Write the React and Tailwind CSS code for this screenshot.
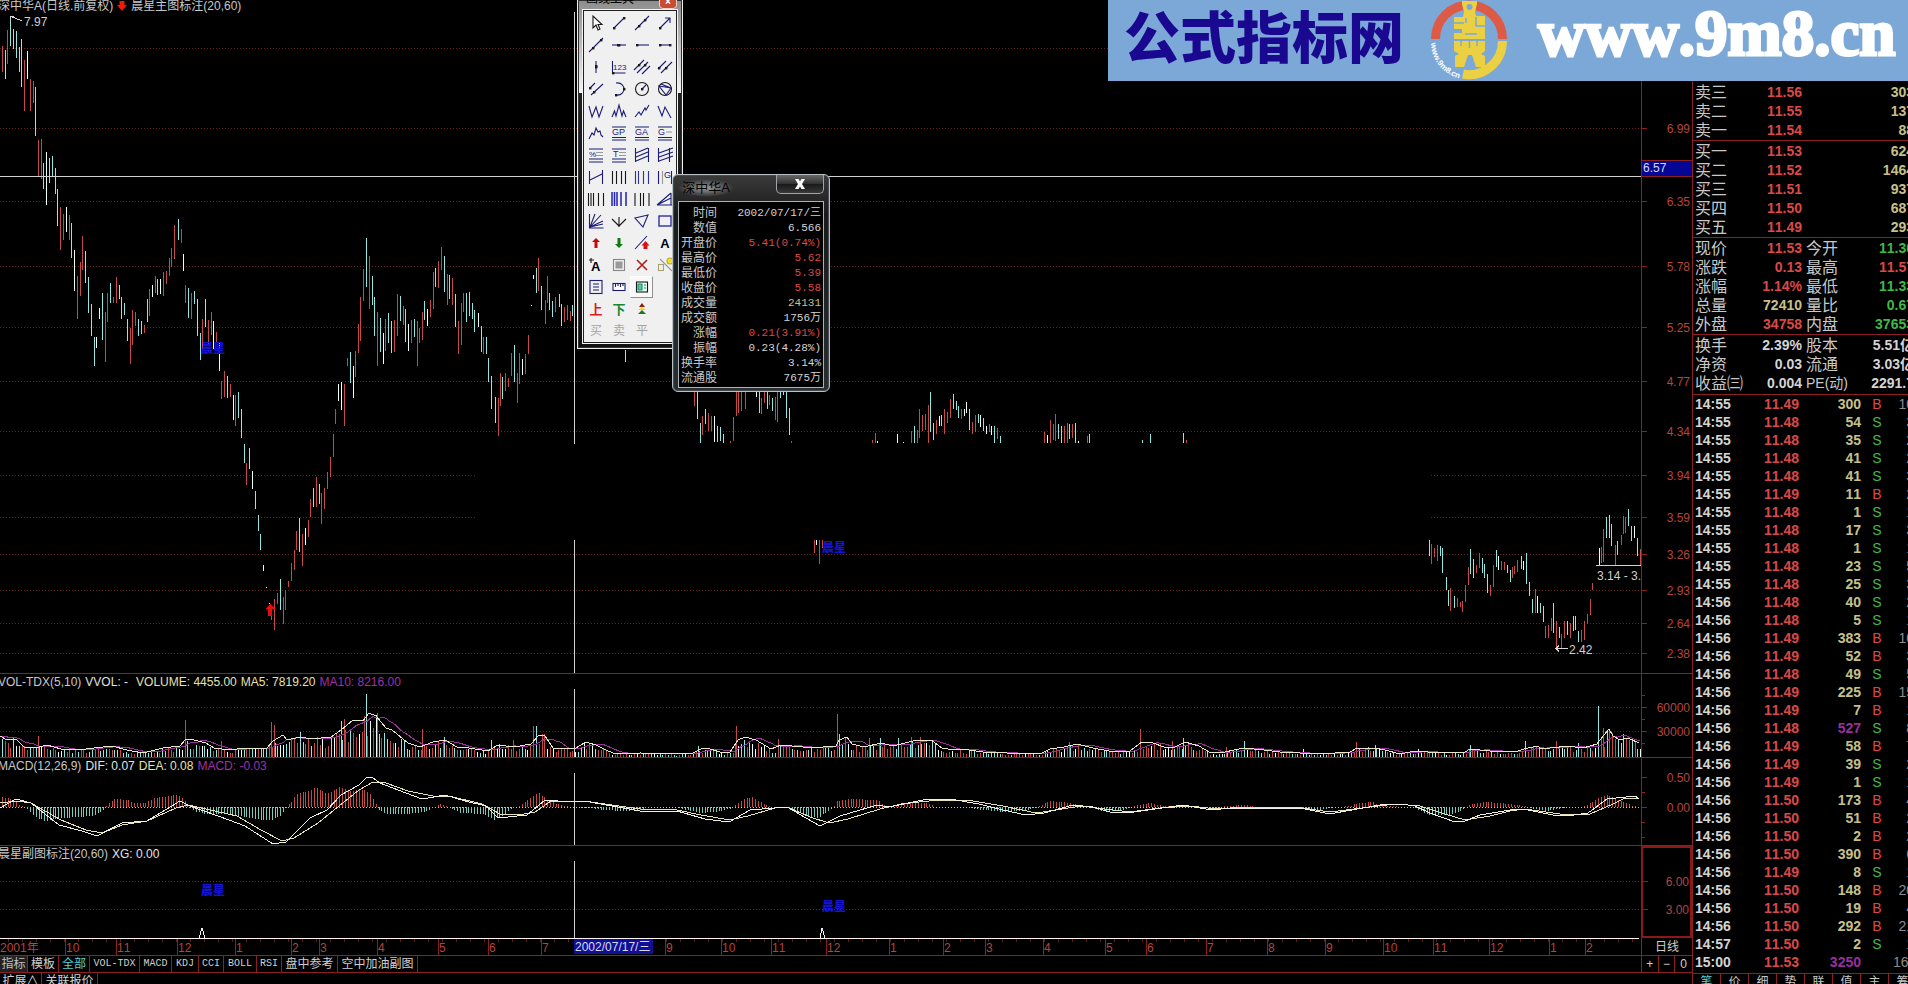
import React from "react";

const RED = "#c44a45";
const CYAN = "#90e6e2";
const WHITE = "#ecfffa";
const TONES = { r: RED, c: CYAN, w: WHITE };

/* Daily ranges: tone + x, top, bottom */
const CANDLES =
  "r2,46,72 c5,50,79 r7,30,64 c10,16,46 c13,29,49 c16,31,58 c19,47,72 c21,39,87 r24,60,111 w27,51,79 r30,79,111 r33,81,103 c35,87,136 r38,140,176 r41,139,179 c43,163,189 w46,152,205 c49,158,183 c52,156,177 c55,168,194 c57,189,226 r60,207,250 r63,214,240 w66,207,232 r69,215,240 c71,223,258 w74,250,291 r77,276,319 r80,262,296 r82,236,270 c85,251,283 c88,277,313 c91,304,336 c94,337,366 w96,337,348 w99,308,319 c102,293,340 r105,312,362 r107,293,322 c110,283,303 r113,297,303 r116,277,303 c119,285,299 c121,297,319 c124,303,315 c127,319,341 r130,328,364 r132,310,345 r135,312,326 c138,319,336 c141,321,334 r144,325,333 c147,299,322 r149,289,316 w152,285,297 r155,276,293 c157,279,295 w160,279,294 r163,272,296 r166,271,284 r169,258,276 r171,248,267 r174,225,259 c178,219,240 r181,229,243 w183,254,271 r185,285,303 c188,288,318 r191,293,319 c194,291,304 c197,299,336 c200,333,360 r202,319,349 c205,299,327 r208,320,345 r211,312,335 w213,321,349 r216,332,343 w219,343,371 r221,381,399 r224,371,397 c227,376,398 r230,384,397 w233,395,420 r235,395,426 c238,392,418 c241,409,438 c244,444,463 r246,463,485 c249,448,469 w252,471,489 c255,491,509 c258,515,531 c260,534,550 w263,565,571 w266,587,588 w269,603,604 r271,608,620 r274,599,630 r277,593,604 c280,579,610 r283,597,624 r285,590,610 r288,581,587 r291,563,581 r294,550,570 r296,531,550 c299,518,552 r302,534,566 w305,528,545 r308,520,537 r310,499,517 c313,488,507 r316,477,507 c319,484,504 r321,493,524 r324,488,509 r327,472,489 r330,457,477 r333,434,457 r335,409,424 w338,384,401 w341,382,410 r344,384,426 r347,358,366 c350,352,383 w353,366,398 r355,351,377 r358,324,353 r360,297,341 r363,269,301 c366,238,287 r369,256,309 c372,276,305 c374,297,336 r377,312,366 c380,318,352 w383,333,364 r385,319,351 c388,313,343 c391,321,353 r394,320,352 r397,294,336 c400,296,321 r403,306,325 c405,309,342 w408,324,351 r411,320,343 c414,319,337 r417,321,366 r419,328,343 r422,312,340 c424,301,320 w427,309,326 r430,300,317 r433,272,309 c435,268,287 r438,261,288 r441,247,270 c444,256,292 r447,274,305 c449,275,299 r452,278,305 c455,294,327 r458,321,354 r461,303,345 r463,293,312 c466,293,322 c469,292,316 c472,303,319 c474,310,332 w478,313,327 c481,326,352 r483,337,354 c486,337,354 c488,358,382 c491,376,409 c495,397,423 r498,398,436 r500,373,406 c502,377,399 r505,373,391 r508,378,387 r511,353,376 c514,345,382 r517,373,403 r519,353,384 w522,359,375 r525,354,374 r528,335,354 w531,305,306 w533,275,279 c536,268,293 r538,258,291 c541,286,310 r545,300,324 r547,276,303 c549,293,310 c552,301,317 r555,297,312 c559,294,307 c561,304,326 r564,307,322 r567,305,320 r570,311,321 c572,305,316 c625,350,362 r694,392,406 c697,392,419 c700,423,443 r702,416,435 c705,409,424 r708,413,431 r711,416,431 w714,416,442 c717,426,442 c720,427,441 c723,434,443 r730,441,443 r733,417,441 r736,392,416 r738,392,413 r741,392,411 r745,392,409 w756,390,397 c759,392,413 r761,398,414 r764,392,403 c767,392,409 r769,395,405 c772,398,411 r775,397,420 r777,392,422 c780,392,398 c783,390,395 c786,392,418 c789,408,435 r791,441,443 r872,440,443 r875,433,443 w877,441,443 w897,434,443 w903,442,443 r911,431,443 c914,426,443 r917,430,443 r919,409,438 r922,415,431 r925,414,430 r928,405,443 c930,392,432 c933,423,440 r936,420,434 w939,416,426 c941,415,426 r944,409,434 r947,412,423 r950,399,418 c953,394,409 c956,401,410 c958,406,418 r961,409,419 w964,409,416 w966,402,413 c969,409,430 r972,422,434 r975,415,432 c978,414,423 w980,415,427 c983,418,431 w986,426,434 r989,424,432 w991,426,435 c994,426,443 r997,428,439 c1000,436,443 r1044,432,443 w1047,435,443 r1050,420,443 r1053,424,440 r1055,414,441 c1058,424,439 c1061,426,443 r1064,426,443 r1067,423,443 c1069,424,439 r1072,424,438 c1075,423,443 w1078,441,443 r1087,436,443 c1089,434,443 c1142,440,443 c1150,434,443 c1183,433,443 r1186,440,443 r814,540,553 w816,540,545 r819,540,564 r822,540,548 c1429,540,556 r1431,544,564 r1434,548,557 r1437,545,561 c1440,546,556 c1442,548,573 c1446,577,590 c1448,590,606 r1450,588,611 c1454,596,608 r1457,598,607 r1460,602,607 r1462,601,612 r1465,585,602 r1468,567,585 c1470,549,574 c1473,559,578 r1476,565,573 r1479,553,568 c1482,558,573 c1484,564,578 c1487,574,593 r1490,585,596 r1493,565,587 c1496,550,567 w1498,556,570 r1501,561,570 r1504,562,570 c1507,565,573 c1510,570,582 r1512,567,578 r1514,566,574 r1517,560,572 c1521,556,569 w1523,561,570 c1526,553,584 c1529,582,596 c1532,599,613 r1535,589,613 w1537,596,613 c1540,603,613 c1543,606,622 r1545,626,638 r1548,625,638 r1551,618,631 c1553,603,633 r1556,621,648 c1559,627,638 r1561,634,648 r1564,621,638 c1567,621,635 r1570,623,638 c1573,616,631 c1575,616,630 c1578,631,642 r1581,630,642 r1584,621,640 r1587,614,624 r1590,599,615 r1592,583,590 w1599,548,565 r1601,547,563 r1603,529,562 c1606,517,538 c1609,515,538 c1611,524,546 r1615,545,565 c1617,541,555 r1621,535,545 r1623,516,534 r1625,517,533 c1628,509,526 c1631,526,541 w1634,526,538 c1637,538,556 r1640,549,565";

const VOLUME_ENVELOPE = [
  [0,21],[7,17],[16,18],[24,10],[39,10],[47,12],[61,8],[78,7],[94,9],[112,11],[127,7],[143,4],[163,9],[180,11],[186,18],[194,17],[206,14],[214,9],[229,7],[245,9],[267,9],[273,16],[283,22],[287,17],[300,20],[312,18],[331,20],[341,27],[353,37],[363,36],[369,44],[376,41],[386,29],[392,27],[408,14],[420,10],[433,15],[445,17],[457,10],[469,9],[488,6],[498,12],[514,10],[531,13],[539,22],[545,21],[553,9],[563,8],[576,9],[586,15],[596,12],[608,6],[616,3],[640,4],[679,3],[693,4],[701,8],[707,9],[720,5],[730,5],[738,17],[745,20],[756,17],[771,8],[781,12],[803,10],[811,9],[836,11],[839,17],[847,20],[852,13],[864,10],[881,14],[893,11],[913,16],[931,17],[942,9],[954,7],[962,8],[983,5],[1007,4],[1040,3],[1050,8],[1064,10],[1077,13],[1093,9],[1109,6],[1130,6],[1142,15],[1150,15],[1167,9],[1175,10],[1185,15],[1199,11],[1209,5],[1220,4],[1244,9],[1264,7],[1280,5],[1320,3],[1350,5],[1357,9],[1375,9],[1385,7],[1400,3],[1415,6],[1440,4],[1465,5],[1470,8],[1490,6],[1515,5],[1524,8],[1537,11],[1542,8],[1567,11],[1583,9],[1597,13],[1600,17],[1609,28],[1613,21],[1620,17],[1628,19],[1639,14],
];

const VOLUME_SPIKES = [
  [38,21,"r"],[185,37,"r"],[221,16,"r"],[271,35,"r"],[274,32,"r"],[300,25,"c"],[341,36,"c"],[344,38,"r"],[366,63,"c"],[377,44,"r"],[422,28,"r"],[444,20,"c"],[491,17,"c"],[513,17,"r"],[533,31,"r"],[536,31,"c"],[698,11,"c"],[736,31,"r"],[778,18,"r"],[837,43,"r"],[839,23,"c"],[869,19,"r"],[880,19,"c"],[898,19,"c"],[911,20,"r"],[920,20,"r"],[1069,15,"r"],[1140,28,"r"],[1172,16,"r"],[1183,19,"c"],[1226,10,"r"],[1244,16,"c"],[1303,8,"w"],[1356,15,"r"],[1375,12,"c"],[1418,8,"w"],[1470,12,"c"],[1525,16,"c"],[1556,16,"r"],[1578,14,"c"],[1598,51,"c"],[1603,29,"r"],[1623,23,"c"],
];

const MACD_BARS = [
  [0,10],[12,8],[18,3],[27,-2],[35,-10],[45,-14],[61,-11],[78,-10],[94,-9],[104,-2],[107,2],[114,8],[127,7],[133,4],[145,4],[155,9],[176,12],[184,8],[188,1],[194,-4],[204,-7],[224,-7],[245,-10],[261,-13],[271,-13],[280,-9],[286,-1],[291,5],[296,13],[310,16],[316,20],[327,13],[339,20],[349,16],[363,17],[369,14],[375,5],[378,-2],[386,-7],[408,-7],[424,-5],[433,-1],[441,3],[447,1],[451,-2],[461,-6],[482,-7],[494,-13],[504,-8],[510,-2],[520,1],[531,10],[539,14],[547,7],[557,3],[565,1],[571,0],[588,-1],[604,-3],[620,-4],[640,-3],[650,0],[677,0],[681,-2],[701,-6],[722,-4],[732,-1],[736,3],[742,7],[752,10],[762,4],[771,0],[787,0],[795,-4],[803,-8],[818,-11],[828,-4],[833,-1],[836,6],[852,8],[877,7],[885,1],[891,0],[905,4],[926,4],[936,0],[964,0],[975,-2],[1003,-5],[1024,-4],[1038,0],[1042,2],[1050,6],[1069,4],[1081,1],[1089,0],[1101,-4],[1118,-4],[1130,-1],[1138,2],[1150,4],[1162,1],[1191,1],[1199,0],[1216,-3],[1224,1],[1244,2],[1256,0],[1290,0],[1300,-1],[1320,-3],[1335,0],[1350,1],[1358,4],[1373,5],[1380,1],[1412,0],[1420,-4],[1430,-8],[1450,-8],[1462,-3],[1466,0],[1472,3],[1483,5],[1500,4],[1517,2],[1528,0],[1533,-2],[1547,-4],[1562,-1],[1567,0],[1583,0],[1588,3],[1598,9],[1607,12],[1615,8],[1625,4],[1633,1],[1639,0],
];

const DIF = [
  [0,-1],[16,8],[31,4],[59,-18],[82,-24],[97,-29],[122,-16],[147,-14],[180,6],[190,1],[229,-13],[245,-19],[273,-37],[286,-35],[310,-11],[327,-3],[341,12],[359,22],[367,30],[372,30],[380,24],[398,17],[422,8],[445,12],[465,6],[486,1],[498,-11],[527,-8],[545,7],[571,5],[584,6],[612,1],[640,-4],[677,-4],[705,-12],[729,-15],[750,-3],[787,0],[820,-19],[840,-9],[877,2],[889,0],[928,8],[950,8],[979,3],[1003,-3],[1026,-8],[1044,-6],[1073,2],[1093,0],[1113,-6],[1134,-5],[1183,2],[1195,0],[1211,-3],[1232,-1],[1300,-1],[1325,-6],[1335,-6],[1363,-1],[1380,2],[1400,3],[1415,1],[1430,-6],[1455,-15],[1465,-14],[1480,-8],[1510,-3],[1523,-2],[1553,-8],[1567,-9],[1588,-6],[1607,8],[1635,11],[1639,8],
];

const DEA = [
  [0,4],[16,6],[31,4],[61,-13],[86,-23],[102,-26],[122,-18],[147,-14],[176,-1],[188,2],[237,-9],[261,-23],[282,-34],[294,-31],[318,-16],[339,1],[359,17],[373,25],[386,24],[408,16],[433,11],[449,11],[482,3],[500,-7],[518,-8],[535,-5],[551,6],[584,6],[640,-2],[677,-3],[701,-8],[730,-13],[748,-9],[775,-1],[787,0],[810,-10],[829,-16],[848,-12],[880,-2],[901,3],[938,7],[967,7],[1003,1],[1036,-6],[1056,-3],[1081,1],[1105,-2],[1130,-5],[1160,-1],[1191,1],[1216,-2],[1244,0],[1295,0],[1330,-5],[1370,0],[1395,3],[1420,1],[1445,-7],[1465,-13],[1490,-9],[1510,-4],[1525,-2],[1560,-7],[1590,-7],[1613,3],[1625,9],[1639,9],
];

function sample(points, x) {
  for (let i = 1; i < points.length; i++) {
    if (x <= points[i][0]) {
      const [x0, y0] = points[i - 1];
      const [x1, y1] = points[i];
      return y0 + ((y1 - y0) * (x - x0)) / (x1 - x0 || 1);
    }
  }
  return points[points.length - 1][1];
}

const noise = (n) => {
  const v = Math.sin(n * 127.1 + 11.7) * 43758.5453;
  return v - Math.floor(v);
};

const SLOTS = Array.from({ length: 584 }, (_, i) => Math.round(2 + i * 2.81));
const line = (pts, base) => pts.map(([x, v]) => `${x},${base - v}`).join(" ");

const PRICE_GRID = [
  [48, ""], [128, "6.99"], [201, "6.35"], [266, "5.78"], [327, "5.25"], [381, "4.77"], [431, "4.34"],
  [475, "3.94"], [517, "3.59"], [554, "3.26"], [590, "2.93"], [623, "2.64"], [653, "2.38"],
];

const MONTHS = [
  [65,"10"],[116,"11"],[177,"12"],[235,"1"],[291,"2"],[319,"3"],[377,"4"],[438,"5"],[488,"6"],[541,"7"],[665,"9"],[721,"10"],[771,"11"],[826,"12"],[889,"1"],[943,"2"],[985,"3"],[1043,"4"],[1105,"5"],[1146,"6"],[1206,"7"],[1267,"8"],[1325,"9"],[1383,"10"],[1433,"11"],[1489,"12"],[1549,"1"],[1585,"2"],
];

function GridLine({ y, x1 = 0, x2 = 1640 }) {
  return <line x1={x1} x2={x2} y1={y + 0.5} y2={y + 0.5} stroke="#682020" strokeDasharray="1 2" />;
}

function Star({ x, y }) {
  return (
    <text x={x} y={y} fill="#1414d0" fontSize="12" fontWeight="900">
      晨星
    </text>
  );
}

function Panel({ height, legend, children, axis, boxed }) {
  return (
    <section className={`flex shrink-0 ${height}`}>
      <div className={`relative min-w-0 flex-1 overflow-hidden ${boxed ? "" : "border-b border-[#8c2020]"}`}>
        <svg className="absolute inset-0 h-full w-full" shapeRendering="crispEdges" aria-hidden="true">
          {children}
        </svg>
        <div className="relative -ml-0.5 flex text-xs leading-4 whitespace-pre text-[#c8c8c8]">{legend}</div>
      </div>
      <div
        className={`w-[51px] shrink-0 overflow-hidden ${
          boxed ? "border-2 border-[#8c1818]" : "border-b border-l border-[#8c2020]"
        }`}
      >
        <svg className="h-full w-full" shapeRendering="crispEdges">
          {axis}
        </svg>
      </div>
    </section>
  );
}

function AxisLabels({ items, right = 48 }) {
  return items.map(([y, label]) => (
    <g key={y}>
      <line x1="0" x2="5" y1={y + 0.5} y2={y + 0.5} stroke="#8c2020" />
      <text x={right} y={y + 5} textAnchor="end" fill="#b4453c" fontSize="12">
        {label}
      </text>
    </g>
  ));
}

function PricePanel() {
  return (
    <Panel
      height="h-[674px]"
      legend={
        <h1 className="-mt-0.5 flex items-center">
          深中华A(日线.前复权)
          <svg className="mx-1 h-[10px] w-[10px]" viewBox="0 0 10 10" aria-hidden="true">
            <path d="M2.5 0h5v4H10L5 10 0 4h2.5z" fill="#f01808" />
          </svg>
          晨星主图标注(20,60)
        </h1>
      }
      axis={
        <>
          <AxisLabels items={PRICE_GRID} />
          <rect x="0" y="160" width="51" height="17" fill="#060696" />
          <path d="M0 160.5H51M0 176.5H51" stroke="#8c2020" />
          <text x="1" y="172" fill="#d8d8f0" fontSize="12">
            6.57
          </text>
        </>
      }
    >
      {PRICE_GRID.map(([y]) =>
        y === 475 || y === 517 ? (
          <g key={y}>
            <GridLine y={y} x2={477} />
            <GridLine y={y} x1={1431} />
          </g>
        ) : (
          <GridLine key={y} y={y} />
        )
      )}
      {CANDLES.split(" ").map((c) => {
        const [x, a, b] = c.slice(1).split(",").map(Number);
        return <rect key={c} x={x} y={a} width="1" height={b - a} fill={TONES[c[0]]} />;
      })}
      <path d="M0 176.5H1641M574.5 12V444M574.5 540V673" stroke="#d0d0d0" fill="none" />
      <path d="M10 19V16L22 21M10 16H14" stroke="#d8d8d8" fill="none" />
      <text x="24" y="26" fill="#d0d0d0" fontSize="12">7.97</text>
      <path d="M1568 648.5H1556M1559 645.5L1556 648.5L1559 651.5" stroke="#d8d8d8" fill="none" />
      <text x="1569" y="654" fill="#d0d0d0" fontSize="12">2.42</text>
      <path d="M1596 565.5H1641" stroke="#d0d0d0" />
      <text x="1597" y="580" fill="#d0d0d0" fontSize="12">3.14 - 3.</text>
      <path d="M270 604L275 609H272V616H268V609H265Z" fill="#e01010" />
      <Star x={201} y={353} />
      <Star x={822} y={552} />
    </Panel>
  );
}

function VolumePanel() {
  const base = 83;
  return (
    <Panel
      height="h-[84px]"
      legend={
        <>
          <span>VOL-TDX(5,10)</span>
          <span className="ml-1 text-[#e0e0e0]">VVOL: -</span>
          <span className="ml-2 text-[#e4e2b0]">VOLUME: 4455.00</span>
          <span className="ml-1 text-[#e4e2b0]">MA5: 7819.20</span>
          <span className="ml-1 text-[#a030a8]">MA10: 8216.00</span>
        </>
      }
      axis={
        <>
          <AxisLabels items={[[33, "60000"], [57, "30000"]]} />
          <path d="M0 21.5H3M0 45.5H3M0 69.5H3" stroke="#8c2020" />
        </>
      }
    >
      <GridLine y={33} />
      <GridLine y={57} />
      {SLOTS.map((x, i) => {
        const h = Math.max(1, Math.round(sample(VOLUME_ENVELOPE, x) * (0.45 + 0.65 * noise(i))));
        const n = noise(i * 3 + 5);
        return <rect key={x} x={x} y={base - h} width="1" height={h} fill={n > 0.5 ? RED : n > 0.15 ? CYAN : WHITE} />;
      })}
      {VOLUME_SPIKES.map(([x, h, t]) => (
        <rect key={x} x={x} y={base - h} width="1" height={h} fill={TONES[t]} />
      ))}
      <polyline
        points={SLOTS.map((x) => `${x},${base - (sample(VOLUME_ENVELOPE, Math.max(0, x - 4)) + sample(VOLUME_ENVELOPE, Math.max(0, x - 16))) / 2}`).join(" ")}
        fill="none"
        stroke="#9a329c"
      />
      <polyline points={line(VOLUME_ENVELOPE, base)} fill="none" stroke="#ece6c8" />
      <path d="M574.5 15V83" stroke="#d0d0d0" />
    </Panel>
  );
}

function MacdPanel() {
  const zero = 49;
  return (
    <Panel
      height="h-[88px]"
      legend={
        <>
          <span>MACD(12,26,9)</span>
          <span className="ml-1 text-[#e4e4e4]">DIF: 0.07</span>
          <span className="ml-1 text-[#e4e2b0]">DEA: 0.08</span>
          <span className="ml-1 text-[#a030a8]">MACD: -0.03</span>
        </>
      }
      axis={
        <>
          <AxisLabels items={[[19, "0.50"], [49, "0.00"]]} />
          <path d="M0 34.5H3M0 64.5H3M0 79.5H3" stroke="#8c2020" />
        </>
      }
    >
      <line x1="0" x2="1640" y1={zero + 0.5} y2={zero + 0.5} stroke="#c8c8a8" strokeDasharray="1 2" />
      {SLOTS.map((x) => {
        const v = Math.round(sample(MACD_BARS, x));
        return (
          <rect key={x} x={x} y={v > 0 ? zero - v : zero} width="1" height={Math.abs(v)} fill={v > 0 ? RED : "#7cc8bc"} />
        );
      })}
      <polyline points={line(DEA, zero)} fill="none" stroke="#e6e2b4" />
      <polyline points={line(DIF, zero)} fill="none" stroke="#f0f0ea" />
      <path d="M574.5 15V87" stroke="#d0d0d0" />
    </Panel>
  );
}

function SignalPanel() {
  return (
    <Panel
      height="h-[92px]"
      boxed
      legend={
        <>
          <span>晨星副图标注(20,60)</span>
          <span className="ml-1 text-[#e4e4e4]">XG: 0.00</span>
        </>
      }
      axis={<AxisLabels items={[[33, "6.00"], [61, "3.00"]]} right={46} />}
    >
      <GridLine y={35} />
      <GridLine y={63} />
      <Star x={201} y={49} />
      <Star x={822} y={65} />
      <path d="M199 92L202 82L205 92M820 92L822 82L825 92" stroke="#f4f4f4" fill="none" />
      <path d="M574.5 15V92" stroke="#d0d0d0" />
    </Panel>
  );
}

function TimeAxis() {
  return (
    <div className="flex h-[18px] shrink-0 border-b border-[#8c2020]">
      <svg className="h-full min-w-0 flex-1" shapeRendering="crispEdges">
        <path d="M0 0.5H1639" stroke="#fff4f0" />
        {Array.from({ length: 118 }, (_, i) => (
          <line key={i} x1={i * 14 + 8.5} x2={i * 14 + 8.5} y1="1" y2="4" stroke="#6c1818" />
        ))}
        <text x="0" y="14" fill="#b4453c" fontSize="12">2001年</text>
        {MONTHS.map(([x, m]) => (
          <g key={x}>
            <line x1={x + 0.5} x2={x + 0.5} y1="1" y2="17" stroke="#8c2020" />
            <text x={x + 1} y="14" fill="#b4453c" fontSize="12">{m}</text>
          </g>
        ))}
        <rect x="574" y="1" width="79" height="15" fill="#101094" />
        <text x="575" y="13" fill="#d8d8f0" fontSize="12">2002/07/17/三</text>
      </svg>
      <div className="w-[51px] border-l border-[#8c2020] text-center text-xs leading-[18px] text-[#d0d0d0]">日线</div>
    </div>
  );
}

const TABS = [
  ["指标", "w-7 bg-[#222] text-[#c0c0c0]"],
  ["模板", "w-[31px]"],
  ["全部", "w-[31px] text-[#58d0d8]"],
  ["VOL-TDX", "w-[50px]"],
  ["MACD", "w-8"],
  ["KDJ", "w-[27px]"],
  ["CCI", "w-[25px]"],
  ["BOLL", "w-[33px]"],
  ["RSI", "w-[25px]"],
  ["盘中参考", "w-14"],
  ["空中加油副图", "w-20"],
];

const LATIN_TAB = "font-['Liberation_Mono','Noto_Sans_CJK_SC',monospace] text-[10px]";

function IndicatorTabs() {
  return (
    <>
      <div className="flex h-[17px] shrink-0 border-b border-[#8c2020] text-[#d0d0d0]">
        <nav className="flex min-w-0 flex-1">
          {TABS.map(([label, look]) => (
            <button
              key={label}
              type="button"
              className={`flex shrink-0 items-center justify-center border-r border-[#8c2020] leading-4 whitespace-nowrap ${look} ${
                /^[A-Z]/.test(label) ? LATIN_TAB : "text-xs"
              }`}
            >
              {label}
            </button>
          ))}
        </nav>
        <div className="grid w-[51px] grid-cols-3 border-l border-[#8c2020] text-xs leading-4">
          <button type="button" className="border-r border-[#8c2020]">+</button>
          <button type="button" className="border-r border-[#8c2020]">−</button>
          <button type="button">0</button>
        </div>
      </div>
      <div className="flex min-h-0 flex-1 overflow-hidden text-xs leading-4 text-[#d0d0d0]">
        <button type="button" className="w-[42px] border-r border-[#8c2020] leading-4">扩展∧</button>
        <button type="button" className="w-14 border-r border-[#8c2020] leading-4">关联报价</button>
      </div>
    </>
  );
}

const SELL = [["卖三", "11.56", "303"], ["卖二", "11.55", "137"], ["卖一", "11.54", "88"]];
const BUY = [
  ["买一", "11.53", "624"], ["买二", "11.52", "1464"], ["买三", "11.51", "937"], ["买四", "11.50", "687"], ["买五", "11.49", "293"],
];
const UP = "text-[#dc4848]";
const DOWN = "text-[#40b848]";
const YELLOW = "text-[#c8c088]";
const PLAIN = "text-[#d4d4d4]";
const STATS = [
  ["现价", "11.53", UP, "今开", "11.30", DOWN],
  ["涨跌", "0.13", UP, "最高", "11.57", UP],
  ["涨幅", "1.14%", UP, "最低", "11.33", DOWN],
  ["总量", "72410", YELLOW, "量比", "0.67", DOWN],
  ["外盘", "34758", UP, "内盘", "37653", DOWN],
];
const STATS2 = [
  ["换手", "2.39%", PLAIN, "股本", "5.51亿", PLAIN],
  ["净资", "0.03", PLAIN, "流通", "3.03亿", PLAIN],
  ["收益㈢", "0.004", PLAIN, "PE(动)", "2291.7", PLAIN],
];

function OrderRows({ rows }) {
  return (
    <table className="w-full table-fixed border-collapse">
      <tbody>
        {rows.map(([label, price, size]) => (
          <tr key={label} className="h-[19px] leading-[19px]">
            <th className="w-12 p-0 text-left text-base leading-[19px] font-normal text-[#c8c8c8]">{label}</th>
            <td className={`w-[59px] p-0 text-right font-bold ${UP}`}>{price}</td>
            <td className={`p-0 text-right font-bold ${YELLOW}`}>{size}</td>
          </tr>
        ))}
      </tbody>
    </table>
  );
}

function StatRows({ rows }) {
  return (
    <dl>
      {rows.map(([l1, v1, c1, l2, v2, c2]) => (
        <div key={l1} className="flex h-[19px] items-center leading-[19px] whitespace-nowrap">
          <dt className="w-12 text-base leading-[19px] text-[#c8c8c8]">{l1}</dt>
          <dd className={`w-[59px] text-right font-bold ${c1}`}>{v1}</dd>
          <dt className={`ml-1 w-10 leading-[19px] text-[#c8c8c8] ${l2 === "PE(动)" ? "text-sm" : "text-base"}`}>{l2}</dt>
          <dd className={`flex-1 text-right font-bold ${c2}`}>{v2}</dd>
        </div>
      ))}
    </dl>
  );
}

/* time, price, size, side, orders */
const TICKS = `14:55 11.49 300 B 10
14:55 11.48 54 S 3
14:55 11.48 35 S 2
14:55 11.48 41 S 2
14:55 11.48 41 S 3
14:55 11.49 11 B 2
14:55 11.48 1 S 1
14:55 11.48 17 S 3
14:55 11.48 1 S 1
14:55 11.48 23 S 5
14:55 11.48 25 S 3
14:56 11.48 40 S 2
14:56 11.48 5 S 1
14:56 11.49 383 B 10
14:56 11.49 52 B 3
14:56 11.48 49 S 5
14:56 11.49 225 B 15
14:56 11.49 7 B 1
14:56 11.48 527 S 8
14:56 11.49 58 B 7
14:56 11.49 39 S 2
14:56 11.49 1 S 1
14:56 11.50 173 B 4
14:56 11.50 51 B 2
14:56 11.50 2 B 2
14:56 11.50 390 B 6
14:56 11.49 8 S 1
14:56 11.50 148 B 20
14:56 11.50 19 B 4
14:56 11.50 292 B 21
14:57 11.50 2 S 1
15:00 11.53 3250 - 161`
  .split("\n")
  .map((row) => row.split(" "));

function QuotePanel() {
  return (
    <aside className="flex w-[216px] shrink-0 flex-col overflow-hidden border-l border-[#8c2020] pt-[83px]">
      <div className="flex w-[221px] shrink-0 flex-col pl-0.5 text-sm">
        <OrderRows rows={SELL} />
        <div className="-ml-0.5 border-y border-[#8c2020] pt-px pl-0.5">
          <OrderRows rows={BUY} />
        </div>
        <div className="pt-px">
          <StatRows rows={STATS} />
        </div>
        <div className="-ml-0.5 border-y border-[#8c2020] py-px pl-0.5">
          <StatRows rows={STATS2} />
        </div>
        <table className="w-full table-fixed border-collapse">
          <tbody>
            {TICKS.map(([time, price, size, side, orders], i) => (
              <tr key={i} className="h-[18px] leading-[18px]">
                <td className={`w-12 p-0 font-bold ${PLAIN}`}>{time}</td>
                <td className={`w-14 p-0 text-right font-bold ${UP}`}>{price}</td>
                <td className={`w-[62px] p-0 text-right font-bold ${Number(size) >= 500 ? "text-[#98309c]" : YELLOW}`}>
                  {size}
                </td>
                <td className={`w-8 p-0 text-center ${side === "B" ? UP : DOWN}`}>{side === "-" ? "" : side}</td>
                <td className="p-0 text-right text-[#8c8c8c]">{orders}</td>
              </tr>
            ))}
          </tbody>
        </table>
      </div>
      <nav className="mt-0.5 flex min-h-0 w-[224px] flex-1 overflow-hidden border-t border-[#8c2020] text-xs text-[#c8c8c8]">
        {["笔", "价", "细", "势", "联", "值", "主", "筹"].map((t, i) => (
          <button
            key={t}
            type="button"
            className={`w-7 shrink-0 border-r border-[#8c2020] leading-4 ${i === 0 ? "text-[#58d0d8]" : ""}`}
          >
            {t}
          </button>
        ))}
      </nav>
    </aside>
  );
}

const N = "#1c1c78";
const K = "#181818";
const dot = (x, y, f = K) => <rect x={x - 1} y={y - 1} width="2.4" height="2.4" fill={f} stroke="none" />;
const lab = (x, y, t, s = 9) => (
  <text x={x} y={y} fontSize={s} fill={N} stroke="none">{t}</text>
);

const TOOLS = [
  ["选择", <path key="a" d="M5 1v12l3-3 2 5 2-1-2-4.500h4z" fill="#fff" stroke={K} />],
  ["线段", <g key="a"><path d="M3 13L13 3" />{dot(3, 13)}{dot(13, 3)}</g>],
  ["直线", <g key="a"><path d="M1 15L15 1" />{dot(5, 11)}{dot(11, 5)}</g>],
  ["箭头", <g key="a"><path d="M3 13L13 3M8 3h5v5" />{dot(3, 13)}</g>],
  ["射线", <g key="a"><path d="M1 15L15 1" />{dot(5, 11)}{dot(13, 3)}</g>],
  ["水平线", <g key="a"><path d="M1 8h14" />{dot(8, 8)}{dot(7, 8)}</g>],
  ["水平射线", <g key="a"><path d="M2 8h13" />{dot(3, 8)}</g>],
  ["水平线段", <g key="a"><path d="M2 8h12" />{dot(3, 8)}{dot(13, 8)}</g>],
  ["垂直线", <g key="a"><path d="M8 2v12" />{dot(8, 8)}{dot(8, 7)}</g>],
  ["价位", <g key="a"><path d="M1.500 2v12h13" />{lab(2, 11, "123", 8)}{dot(2, 14)}</g>],
  ["平行线", <g key="a"><path d="M0 11L10 1M3 14L14 3M8 15l8-8" />{dot(5, 6)}{dot(11, 6)}</g>],
  ["平行射线", <g key="a"><path d="M1 10l8-8M4 14L15 3" />{dot(2, 9)}{dot(9, 9)}</g>],
  ["平行线段", <g key="a"><path d="M2 7l5-5M3 14L15 3" />{dot(2, 7)}{dot(6, 11)}</g>],
  ["圆弧", <g key="a"><path d="M5 2c6-1 8 4 8 6s-2 7-8 6" />{dot(5, 14)}{dot(13, 8)}</g>],
  ["圆", <g key="a"><circle cx="8" cy="8" r="6.500" stroke={K} /><path d="M8 8l4-4" />{dot(8, 8)}</g>],
  ["外接圆", <g key="a"><circle cx="8" cy="8" r="6.500" stroke={K} /><path d="M2 5l12 2-5 7zM4 3l10 4" /></g>],
  ["W浪", <path key="a" d="M1 3l3 11 4-10 3 10 4-11" />],
  ["多浪", <path key="a" d="M1 14l2.500-6 1.500 5 3-11 3 11 1.500-5 2.500 6" />],
  ["上升浪", <path key="a" d="M1 14l4-5 2 3 4-7 1 2 3-5" />],
  ["下降浪", <path key="a" d="M1 3l4 10 3-9 6 11" />],
  ["头肩", <path key="a" d="M1 14l3-6 2 2 2-7 2 4 2-1 1 4 2 2" />],
  ["黄金价位", <g key="a"><path d="M1 2h14M1 12.500h14M1 15h14" />{lab(1, 10, "GP")}</g>],
  ["黄金目标", <g key="a"><path d="M1 2h14M1 12.500h14M1 15h14" />{lab(1, 10, "GA")}</g>],
  ["黄金分割", <g key="a"><path d="M1 2h14M1 12.500h14M1 15h14" /><path d="M9 7h6" stroke="#999" />{lab(1, 10, "G")}</g>],
  ["百分比线", <g key="a"><path d="M1 2h14M1 12h14M1 15h14" /><path d="M8 5.500h7M8 8.500h7" stroke="#999" />{lab(1, 10, "%", 8)}</g>],
  ["波段线", <g key="a"><path d="M1 2h14M1 12h14M1 15h14" /><path d="M8 5.500h7M8 8.500h7" stroke="#999" />{lab(2, 10, "T")}</g>],
  ["线性回归带", <path key="a" d="M1.500 1v14M14.500 1v14M2 6l12-5M2 10l12-5M2 14l12-5" />],
  ["延长回归带", <path key="a" d="M1.500 1v14M12.500 1v14M2 6l14-5M2 10l14-5M2 14l14-5" />],
  ["线性回归", <path key="a" d="M1.500 2v13M14.500 1v14M2 11l12-6" />],
  ["周期线", <path key="a" d="M1.500 2v13M5.500 2v13M10.500 2v13M14.500 2v13" stroke={K} />],
  ["时间线", <path key="a" d="M1.500 2v13M4.500 2v13M9.500 2v13M14.500 2v13" stroke="#3030a0" />],
  ["神奇数字", <g key="a"><path d="M1.500 2v13" />{lab(7, 9, "G")}<path d="M5.500 2v13" stroke="#999" /><path d="M14.500 2v13" /></g>],
  ["费波拉契线", <path key="a" d="M0.500 2v13M3 2v13M5.500 2v13M10.500 2v13M15.500 2v13" stroke={K} />],
  ["卢卡斯线", <path key="a" d="M1 1v14M3.500 1v14M6 1v14M10 1v14M15 1v14" stroke="#2020b8" strokeWidth="1.500" />],
  ["自定周期", <path key="a" d="M1 2v13M6.500 2v13M9.500 2v13M15 2v13" stroke={K} />],
  ["速阻线", <path key="a" d="M0 14L14 2M0 14l14-7M0 14h15M14 2v12" />],
  ["甘氏线", <path key="a" d="M1.500 1v14h14M2 14L7 1M2 14L13 2M2 14l13-6M2 14l13-3" />],
  ["角度线", <path key="a" d="M8 14V4M8 13L1 6M8 13l7-7" stroke={K} />],
  ["三角形", <path key="a" d="M1 5l13-3-5 12z" />],
  ["矩形", <rect key="a" x="2" y="3" width="12" height="10" stroke="#2020a0" strokeWidth="1.300" />],
  ["涨标记", <path key="a" d="M8 3l4 4H9.500v6h-3V7H4z" fill="#c80808" stroke="none" />],
  ["跌标记", <path key="a" d="M8 13L4 9h2.500V3h3v6H12z" fill="#107810" stroke="none" />],
  ["趋势标记", <g key="a"><path d="M1 14L13 1" /><path d="M11.500 6l4 4.500h-2V14h-4v-3.500h-2z" fill="#d81010" stroke="none" /></g>],
  ["文字", <text key="a" x="8" y="13" textAnchor="middle" fontSize="13" fontWeight="700" fill="#000" stroke="none">A</text>],
  ["锚定文字", <g key="a"><text x="3" y="14" fontSize="13" fontWeight="700" fill="#000" stroke="none">A</text><path d="M3 1v5M1 3h5" stroke={K} /></g>],
  ["画线属性", <g key="a"><rect x="2.500" y="2.500" width="11" height="11" stroke="#888" /><rect x="4.500" y="4.500" width="7" height="7" fill="#999" stroke="none" /></g>],
  ["删除", <path key="a" d="M3 3l10 10M13 3L3 13" stroke="#b01c1c" strokeWidth="1.600" />],
  ["隐藏画线", <g key="a"><path d="M3 2l12 12" stroke="#999" /><rect x="1.500" y="7.500" width="5" height="6" stroke="#aaa070" /><circle cx="13" cy="4" r="3" fill="#f0e030" stroke="#c0b020" /></g>],
  ["画线列表", <g key="a"><rect x="2" y="1.500" width="12" height="13" /><path d="M5 5h6M5 8h6M5 11h6" /></g>],
  ["测量", <g key="a"><rect x="2" y="4.500" width="12" height="7" fill="#fff" /><path d="M4.500 5v3M7 5v2M9.500 5v3M12 5v2" /></g>],
  ["数值窗口", <g key="a"><rect x="2.500" y="3" width="11" height="10" fill="#e8fff4" stroke={K} /><path d="M4 5h4v6H4zM10 6h2M10 9h2" stroke="#109068" fill="#60c8a0" /></g>],
  null,
  ["上", <text key="a" x="8" y="13" textAnchor="middle" fontSize="13" fontWeight="700" fill="#e01818" stroke="none">上</text>],
  ["下", <text key="a" x="8" y="13" textAnchor="middle" fontSize="13" fontWeight="700" fill="#188830" stroke="none">下</text>],
  ["多空", <g key="a" stroke="none"><path d="M8 2l3 4H5z" fill="#8c2010" /><path d="M8 6l4 3H4z" fill="#e8d820" /><path d="M8 9l4 4H4z" fill="#287020" /></g>],
  null,
  ["买", <text key="a" x="8" y="12" textAnchor="middle" fontSize="12" fill="#a4a4a4" stroke="none">买</text>],
  ["卖", <text key="a" x="8" y="12" textAnchor="middle" fontSize="12" fill="#a4a4a4" stroke="none">卖</text>],
  ["平", <text key="a" x="8" y="12" textAnchor="middle" fontSize="12" fill="#a4a4a4" stroke="none">平</text>],
];

function DrawingTools() {
  return (
    <div className="absolute top-0 left-[577px] w-[106px] border border-t-0 border-[#f0f0f0] bg-[linear-gradient(to_bottom,#8c8c8c_0,#f4f4f4_93px,#202020_93px,#101010_100%)] p-1 pt-0 shadow-[inset_0_0_0_1px_#303030]">
      <div className="flex h-[9px] items-end justify-between overflow-hidden pr-px pl-1">
        <h2 className="pb-0.5 text-xs leading-4 text-black">画线工具</h2>
        <button
          type="button"
          aria-label="关闭画线工具"
          className="flex h-4 w-[18px] items-end justify-center rounded-b-sm border border-[#f0d0c8] bg-[#c84c34] text-[10px] leading-3 font-bold text-white"
        >
          ×
        </button>
      </div>
      <div className="border border-[#f4f4f4]">
        <div className="grid h-[333px] grid-cols-[repeat(4,23px)] content-start border border-[#202020] bg-[#f0f0f0] pt-px">
          {TOOLS.map((tool, i) =>
            tool ? (
              <button
                key={i}
                type="button"
                aria-label={tool[0]}
                className={`flex h-[22px] items-center justify-center ${
                  tool[0] === "数值窗口" ? "border border-t-white border-r-[#909090] border-b-[#909090] border-l-white bg-[#f8f8f8]" : ""
                }`}
              >
                <svg className="h-4 w-4 overflow-visible" viewBox="0 0 16 16" fill="none" stroke={N} strokeWidth="1.100">
                  {tool[1]}
                </svg>
              </button>
            ) : (
              <span key={i} />
            )
          )}
        </div>
      </div>
    </div>
  );
}

const DETAILS = [
  ["时间", "2002/07/17/三", PLAIN],
  ["数值", "6.566", PLAIN],
  ["开盘价", "5.41(0.74%)", UP],
  ["最高价", "5.62", UP],
  ["最低价", "5.39", UP],
  ["收盘价", "5.58", UP],
  ["成交量", "24131", YELLOW],
  ["成交额", "1756万", PLAIN],
  ["涨幅", "0.21(3.91%)", UP],
  ["振幅", "0.23(4.28%)", PLAIN],
  ["换手率", "3.14%", PLAIN],
  ["流通股", "7675万", PLAIN],
];

function DetailWindow() {
  return (
    <div className="absolute top-[174px] left-[672px] w-[158px] rounded-md border border-[#b8c0c4] bg-[linear-gradient(to_bottom,#3a3a3a,#1a1a1a_40px,#283034)] px-[5px] pb-[3px] shadow-[inset_0_0_0_1px_#484c50]">
      <header className="flex h-[26px] items-start justify-between">
        <h2 className="mt-1 w-14 bg-[radial-gradient(closest-side,#9a9a9a,#70707080_70%,#50505000)] text-center text-[13px] leading-[18px] whitespace-nowrap text-black">
          深中华A
        </h2>
        <button
          type="button"
          aria-label="关闭"
          className="flex h-[19px] w-12 items-center justify-center rounded-b-[5px] border border-t-0 border-[#a0a4a8] bg-[linear-gradient(to_bottom,#686868,#303030_50%,#181818_50%,#383838)]"
        >
          <svg className="h-2.5 w-3" viewBox="0 0 12 10" aria-hidden="true">
            <path d="M1 0h3.500L6 2.500 7.500 0H11L8 5l3 5H7.500L6 7.500 4.500 10H1l3-5z" fill="#fff" />
          </svg>
        </button>
      </header>
      <dl className="border border-[#a8b4b8] bg-black pt-1 pr-0.5 pb-px pl-0.5 text-xs">
        {DETAILS.map(([label, value, tone]) => (
          <div key={label} className="flex h-[15px] items-center justify-between leading-[15px] whitespace-nowrap">
            <dt className="w-9 text-right text-[#c8c8c8]">{label}</dt>
            <dd className={`font-['Liberation_Mono','Noto_Sans_CJK_SC',monospace] text-[11px] leading-[15px] ${tone}`}>{value}</dd>
          </div>
        ))}
      </dl>
    </div>
  );
}

function Banner() {
  return (
    <div className="absolute top-0 right-0 flex h-[81px] w-[800px] items-start bg-[#7ba8d6] pl-4">
      <p className="w-[280px] text-[56px] leading-[78px] font-black whitespace-nowrap text-[#1a0890]">公式指标网</p>
      <svg className="ml-[26px] h-[80px] w-[78px] shrink-0" viewBox="0 0 78 80" aria-hidden="true">
        <path d="M5.500 39A33.500 34 0 0 1 72.500 39" fill="none" stroke="#dc5a46" strokeWidth="9" />
        <path d="M72.500 41A33 34 0 0 1 33 74" fill="none" stroke="#ecd044" strokeWidth="9" />
        <path
          d="M32 1h15v3l-2 8 1 4h9v23H24V33h8v-4h-8V17h9l1-5-2-8zM24 41h31v10l-4 3 4 2v11h-9l-4-12h-4l-4 12h-9V56l4-2-5-3z"
          fill="#ecd044"
        />
        <circle cx="39.500" cy="7" r="3" fill="#7ba8d6" />
        <path d="M24 23h10M36 18v5M46 17v9h9M35 34h12M31 41v5M47 41v5M39.500 41v7" stroke="#7ba8d6" strokeWidth="1.400" fill="none" />
        <path id="seal-arc" d="M1 43A37 37 0 0 0 33 79" fill="none" />
        <text fontSize="8" fontWeight="700" fill="#fff">
          <textPath href="#seal-arc">www.9m8.cn</textPath>
        </text>
      </svg>
      <a
        href="#home"
        className="ml-[30px] font-['Liberation_Serif',serif] text-[65px] leading-[66px] font-bold whitespace-nowrap text-white [-webkit-text-stroke:3px_white]"
      >
        www.9m8.cn
      </a>
    </div>
  );
}

export default function App() {
  return (
    <div className="relative flex h-screen overflow-hidden bg-black font-['Liberation_Sans','Noto_Sans_CJK_SC',sans-serif] [font-kerning:none]">
      <main className="flex min-w-0 flex-1 flex-col">
        <PricePanel />
        <VolumePanel />
        <MacdPanel />
        <SignalPanel />
        <TimeAxis />
        <IndicatorTabs />
      </main>
      <QuotePanel />
      <DrawingTools />
      <DetailWindow />
      <Banner />
    </div>
  );
}
